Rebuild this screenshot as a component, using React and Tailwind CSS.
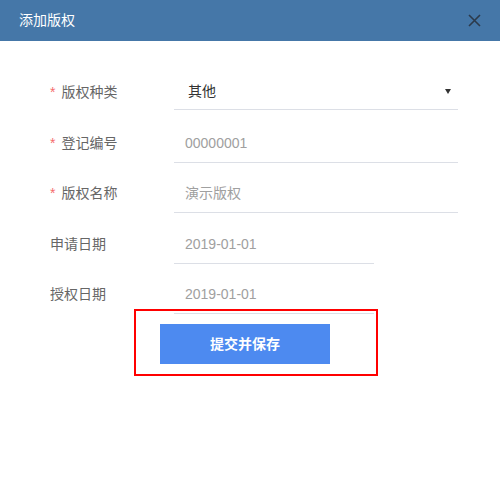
import React from 'react';

const font = { fontFamily: '"Liberation Sans", "Noto Sans CJK SC", sans-serif' };

function Field({ label, required, value, wide = true, top, dark, select }) {
  return (
    <div className={`flex items-start ${top}`}>
      <div
        className={`w-[174px] pl-[50px] h-[36px] flex items-center text-[14px] text-[#666] ${
          dark ? '' : 'pb-[3px]'
        }`}
      >
        {required && <span className="text-[#f56c6c] mr-[6px]">*</span>}
        <span>{label}</span>
      </div>
      <div
        className={`${wide ? 'w-[284px]' : 'w-[200px]'} h-[36px] border-b border-[#dcdfe6] flex items-center justify-between text-[14px] ${
          dark ? 'pl-[14px] text-[#333]' : 'pl-[11px] pb-[3px] text-[#a0a0a0]'
        }`}
      >
        <span>{value}</span>
        {select && (
          <svg width="8" height="7" viewBox="0 0 8 7" className="mr-[6px]">
            <polygon points="1,1 7,1 4,6" fill="#333" />
          </svg>
        )}
      </div>
    </div>
  );
}

export default function App() {
  return (
    <div className="w-[500px] h-[497px] bg-white relative overflow-hidden" style={font}>
      {/* header */}
      <div className="h-[41px] bg-[#4577a8] flex items-center justify-between pl-[19px] pr-[19px]">
        <span className="text-white text-[14px]">添加版权</span>
        <svg width="13" height="13" viewBox="0 0 13 13">
          <path d="M1 1 L12 12 M12 1 L1 12" stroke="#2c3a4b" strokeWidth="1.6" />
        </svg>
      </div>

      <div className="pt-[33px]">
        <Field label="版权种类" required value="其他" dark select top="" />
        <Field label="登记编号" required value="00000001" top="mt-[17px]" />
        <Field label="版权名称" required value="演示版权" top="mt-[14px]" />
        <Field label="申请日期" value="2019-01-01" wide={false} top="mt-[15px]" />
        <Field label="授权日期" value="2019-01-01" wide={false} top="mt-[14px]" />

        <div className="mt-[10px] pl-[160px]">
          <button className="w-[170px] h-[40px] bg-[#4d8af0] text-white text-[14px] font-bold">
            提交并保存
          </button>
        </div>
      </div>

      {/* highlight annotation */}
      <div className="absolute left-[134px] top-[309px] w-[244px] h-[67px] border-2 border-[#ff0000] pointer-events-none" />
    </div>
  );
}
